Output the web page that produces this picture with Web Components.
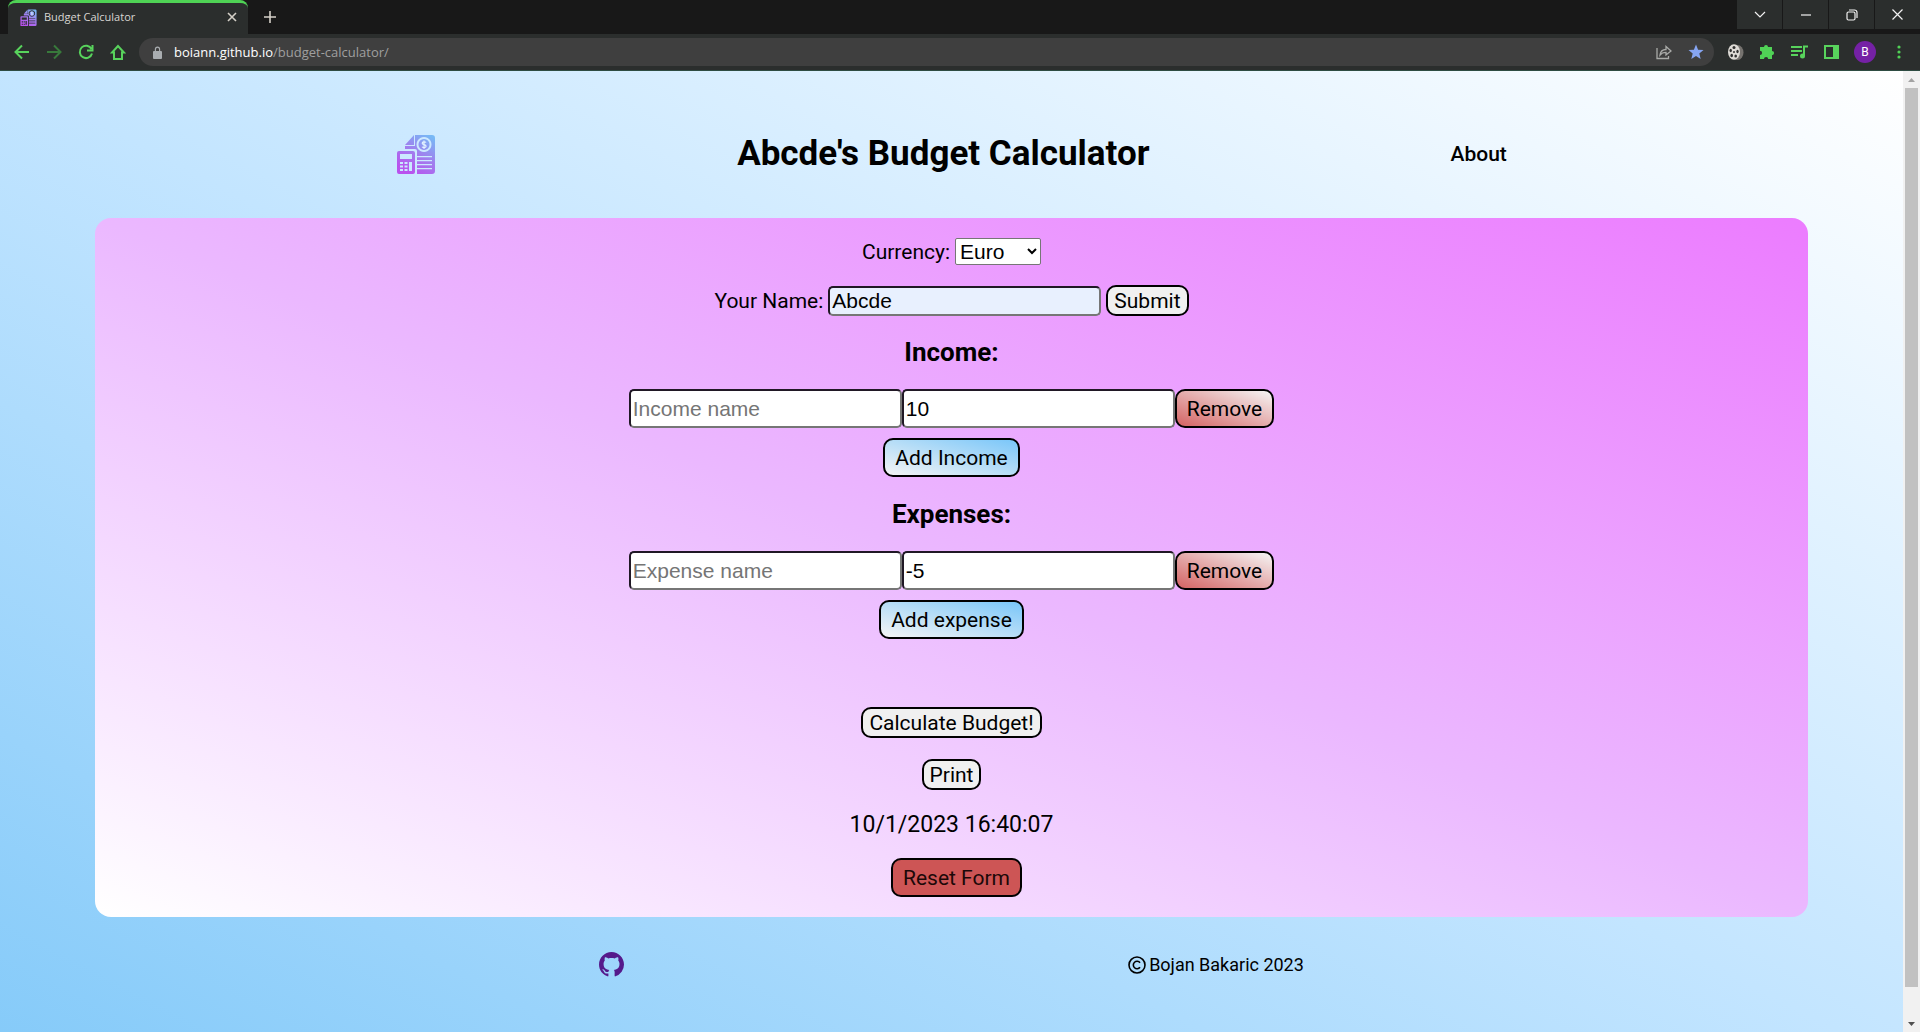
<!DOCTYPE html>
<html lang="en">
<head>
<meta charset="utf-8">
<title>Budget Calculator</title>
<style>
html, body { margin: 0; height: 100%; overflow: hidden; }
body { font: 400 21px/24px Roboto, sans-serif; color: #000; }
</style>
</head>
<body>
<browser-window></browser-window>
<script>
const CONTROL_CSS = `
  button { font: inherit; color: #000; border: 2px solid #000; border-radius: 10px; padding: 2px 6px 1px; background: #f0f0f0; white-space: nowrap; margin: 0; }
  input { box-sizing: border-box; width: 273px; height: 30px; margin: 0; padding: 1px 2px; font: 21px "Liberation Sans", Arial, sans-serif; color: #000; background: #fff; border: 2px solid; border-color: #201825 #767676 #767676 #201825; border-radius: 5px; }
  input::placeholder { color: #757575; opacity: 1; }
`;

function define(name, css, html, setup) {
  customElements.define(name, class extends HTMLElement {
    constructor() {
      super();
      this.attachShadow({ mode: 'open' }).innerHTML = `<style>${css}</style>${html}`;
    }
    connectedCallback() { if (setup) setup(this, this.shadowRoot); }
  });
}

define('budget-logo', `:host { display: block; width: 40px; height: 40px; } svg { display: block; width: 100%; height: 100%; }`, `
  <svg viewBox="0 0 40 40" aria-hidden="true">
    <defs><linearGradient id="g" gradientUnits="userSpaceOnUse" x1="12" y1="38" x2="34" y2="2"><stop offset="0" stop-color="#b952ee"/><stop offset=".5" stop-color="#a07fee"/><stop offset="1" stop-color="#78b8f5"/></linearGradient></defs>
    <g fill="url(#g)">
      <path fill-rule="evenodd" d="M19 1H36a3 3 0 0 1 3 3V37a3 3 0 0 1-3 3H21V17a2 2 0 0 0-2-2H9V12H19ZM28 3a7.500 7.500 0 1 0 .01 0ZM21 22v1.200h15V22ZM21 26v1.200h15V26ZM21 30v1.200h15V30ZM21 34v1.200h15V34Z"/>
      <path d="M18 1V11H9ZM28 5a5.500 5.500 0 1 0 .01 0Z"/>
      <path fill-rule="evenodd" d="M3 17H17a2 2 0 0 1 2 2V38a2 2 0 0 1-2 2H3a2 2 0 0 1-2-2V19a2 2 0 0 1 2-2ZM4 20v5h12v-5ZM4 28v2h3v-2ZM8.500 28v2h3v-2ZM13 28v9h3v-9ZM4 31.500v2h3v-2ZM8.500 31.500v2h3v-2ZM4 35v2h3v-2ZM8.500 35v2h3v-2Z"/>
    </g>
    <path d="M30 8.500c-.6-1-3.800-1-3.800.7 0 2 3.900 1 3.900 3 0 1.700-3.400 1.700-4.100.5M28 6.500v8.500" fill="none" stroke="#e3f3ff" stroke-width="1.200"/>
  </svg>`);

define('browser-tabs', `
  :host { display: flex; height: 34px; background: #181818; color: #d8d6d2; font: 400 11px/16px "Open Sans", sans-serif; justify-content: space-between; }
  .left, .controls { display: flex; }
  .tab { box-sizing: border-box; width: 240px; margin-left: 8px; padding: 0 9px 3px 12px; display: flex; align-items: center; gap: 7px; background: #2b2e2d; border-top: 3px solid #4fd355; border-radius: 8px 8px 0 0; }
  budget-logo { width: 17px; height: 17px; }
  .tab span { flex: 1; }
  button { padding: 0; margin: 0; border: 0; background: none; color: inherit; display: grid; place-items: center; }
  .tab button { width: 14px; height: 14px; }
  .new { width: 44px; height: 34px; }
  .controls { gap: 1px; height: 29px; }
  .controls button { width: 45px; height: 29px; background: #2b2e2d; }
  svg { display: block; fill: none; stroke: #f2f2f2; stroke-width: 1.2; }
  .tab svg, .new svg { stroke: #d5d0c8; stroke-width: 1.6; }
`, `
  <div class="left">
    <div class="tab"><budget-logo></budget-logo><span>Budget Calculator</span>
      <button aria-label="Close tab"><svg width="10" height="10"><path d="M1 1l8 8M9 1L1 9"/></svg></button></div>
    <button class="new" aria-label="New tab"><svg width="12" height="12"><path d="M6 0v12M0 6h12"/></svg></button>
  </div>
  <div class="controls">
    <button aria-label="Search tabs"><svg width="12" height="8"><path d="M1 1l5 5 5-5"/></svg></button>
    <button aria-label="Minimize"><svg width="10" height="2"><path d="M0 1h10"/></svg></button>
    <button aria-label="Restore"><svg width="12" height="12"><rect x="1" y="3" width="8" height="8" rx="1.500"/><path d="M3 1h5.500a2.500 2.500 0 0 1 2.500 2.500V9"/></svg></button>
    <button aria-label="Close"><svg width="11" height="11"><path d="M.5.5l10 10M10.500.5l-10 10"/></svg></button>
  </div>`);

define('browser-toolbar', `
  :host { display: flex; box-sizing: border-box; height: 37px; padding: 0 12px 0 13px; align-items: center; gap: 12px; background: #2b2e2d; border-bottom: 1px solid #2e4c42; font: 400 13px/20px "Open Sans", sans-serif; }
  nav, .tools { display: flex; align-items: center; gap: 14px; }
  button { padding: 0; border: 0; background: none; width: 18px; height: 20px; display: grid; place-items: center; margin: 0; color: #58d35c; font: inherit; }
  .omni { flex: 1; box-sizing: border-box; height: 28px; border-radius: 14px; background: #3f3f3f; display: flex; align-items: center; padding: 0 8px 0 14px; gap: 12px; }
  .url { flex: 1; color: #9f9f9f; }
  .url b { font-weight: 400; color: #fff; }
  .omni button { width: 20px; }
  .avatar { width: 22px; height: 22px; border-radius: 50%; background: #7521a5; color: #fff; font: 12px/22px Roboto, sans-serif; }
  svg { display: block; fill: none; stroke: #58d35c; stroke-width: 2; }
`, `
  <nav aria-label="Browser">
    <button aria-label="Back"><svg width="16" height="16"><path d="M15 8H2M8 1.500L1.500 8 8 14.500"/></svg></button>
    <button aria-label="Forward"><svg width="16" height="16" style="stroke:#387a3b"><path d="M1 8h13M8 1.500L14.500 8 8 14.500"/></svg></button>
    <button aria-label="Reload"><svg width="16" height="16"><path d="M13.500 5A6.200 6.200 0 1 0 14 9.500M14.500 1v5.500H9"/></svg></button>
    <button aria-label="Home"><svg width="16" height="17"><path d="M8 2L2 8.500h2V15h8V8.500h2Z"/></svg></button>
  </nav>
  <div class="omni">
    <svg width="9" height="13" viewBox="0 0 10 13" preserveAspectRatio="none" style="stroke:none;fill:#a9adb0"><path fill-rule="evenodd" d="M1 5h1V3.500a3 3 0 0 1 6 0V5h1a1 1 0 0 1 1 1v6a1 1 0 0 1-1 1H1a1 1 0 0 1-1-1V6a1 1 0 0 1 1-1Zm2.300 0h3.400V3.500a1.700 1.700 0 0 0-3.400 0Z"/></svg>
    <span class="url"><b>boiann.github.io</b>/budget-calculator/</span>
    <button aria-label="Share"><svg width="16" height="16" style="stroke:#a9aaa8;stroke-width:1.300"><path d="M1 4v10.500h11.500V12M4 11c.5-4 3-5.500 6-5.500V2.500L15 7l-5 4V8.300C7.500 8.300 5.500 9 4 11Z"/></svg></button>
    <button aria-label="Bookmark"><svg width="16" height="16" style="stroke:none;fill:#86a5f2"><path d="M8 .5l2.100 5.200 5.400.4-4.200 3.500 1.400 5.500L8 12.100l-4.700 3 1.400-5.500L.5 6.100l5.400-.4Z"/></svg></button>
  </div>
  <div class="tools">
    <button aria-label="Extension"><svg width="17" height="17" style="stroke:none"><ellipse cx="10.500" cy="8.500" rx="6" ry="7.500" fill="#76736f"/><ellipse cx="7" cy="8" rx="6" ry="7.700" fill="#dedbd6"/><g fill="#30302f"><ellipse cx="7" cy="3.500" rx="1.500" ry="1.600"/><ellipse cx="3.700" cy="6.500" rx="1.200" ry="1.700"/><ellipse cx="4.700" cy="11.500" rx="1.300" ry="1.800"/><ellipse cx="8.700" cy="12" rx="1.300" ry="1.600"/><ellipse cx="10.500" cy="7.500" rx="1.200" ry="1.800"/><circle cx="7" cy="8" r="1"/></g></svg></button>
    <button aria-label="Extensions"><svg width="16" height="16" style="stroke:none;fill:#50d256"><path d="M5 3a2 2 0 0 1 4 0h4v4a2.100 2.100 0 0 1 0 4.200V15H9.200a2.100 2.100 0 0 0-4.200 0H1v-4a2.100 2.100 0 0 0 0-4.200V3Z"/></svg></button>
    <button aria-label="Media"><svg width="17" height="14"><path d="M0 2h11M0 6h11M0 10h7M13 11V1.500h4" /><circle cx="11.500" cy="11" r="2.500" fill="#58d35c" stroke="none"/></svg></button>
    <button aria-label="Side panel"><svg width="15" height="14"><path d="M1 1h13v12H1Z"/><path d="M9 0h6v14H9Z" fill="#58d35c" stroke="none"/></svg></button>
    <button class="avatar" aria-label="Profile">B</button>
    <button aria-label="Menu"><svg width="4" height="14" style="stroke:none;fill:#50d256"><circle cx="2" cy="2" r="1.600"/><circle cx="2" cy="7" r="1.600"/><circle cx="2" cy="12" r="1.600"/></svg></button>
  </div>`);

define('page-scrollbar', `
  :host { display: flex; flex-direction: column; width: 17px; background: #f1f1f1; align-items: center; }
  svg { display: block; width: 17px; height: 17px; flex: none; }
  .track { flex: 1; width: 13px; }
  .thumb { height: 97%; background: #c1c1c1; }
`, `<svg><path d="M5 11l3.500-4L12 11Z" fill="#a3a3a3"/></svg><div class="track"><div class="thumb"></div></div><svg><path d="M5 7h7l-3.500 4Z" fill="#505050"/></svg>`);

define('budget-header', `
  :host { display: flex; width: 90%; margin: 0 auto; padding: 62px 0 43px; justify-content: space-evenly; align-items: center; }
  h1 { margin: 0; font-size: 35px; line-height: 42px; font-weight: 700; }
  a { color: #000; text-decoration: none; font-weight: 500; }
`, `<budget-logo></budget-logo><h1>Abcde's Budget Calculator</h1><a href="#about">About</a>`);

define('entry-section', `
  ${CONTROL_CSS}
  :host { display: flex; flex-direction: column; align-items: center; }
  h2 { margin: 0 0 21px; font-size: 26px; line-height: 32px; font-weight: 700; }
  .row { display: flex; margin-bottom: 10px; }
  .row input { height: 39px; }
  button { height: 39px; padding: 0 10px; }
  .remove { background: linear-gradient(to top right, #d46363, #f5f5f5); }
  .add { background: linear-gradient(to bottom left, #79c6f9, #f5f5f5); }
`, `<h2><slot></slot></h2>
  <div class="row"><input class="name" type="text"><input class="amount" type="text" inputmode="decimal"><button class="remove" type="button">Remove</button></div>
  <button class="add" type="button"></button>`,
  (host, root) => {
    const name = root.querySelector('.name');
    name.placeholder = host.getAttribute('placeholder');
    name.setAttribute('aria-label', name.placeholder);
    const amount = root.querySelector('.amount');
    amount.value = host.getAttribute('amount');
    amount.setAttribute('aria-label', 'Amount');
    root.querySelector('.add').textContent = host.getAttribute('add');
  });

define('budget-form', `
  ${CONTROL_CSS}
  :host { display: block; width: 90%; margin: 0 auto; border-radius: 16px; background: linear-gradient(to top right, #fff, #ebb8ff 50%, #ec7cff); }
  form { display: flex; flex-direction: column; align-items: center; padding: 20px 0; }
  .field { display: flex; align-items: center; gap: 5px; margin-bottom: 20px; }
  select { box-sizing: border-box; width: 86px; height: 27px; margin: 0; padding: 0; font: 21px "Liberation Sans", Arial, sans-serif; color: #000; background: #fff; border: 1px solid #767676; border-radius: 2px; }
  #name { background: #e8f0fe; }
  entry-section { margin-bottom: 21px; }
  .calc { margin-top: 47px; }
  .print { margin: 21px 0; }
  time { font-size: 23px; line-height: 27px; }
  .reset { height: 39px; padding: 0 10px; margin: 20px 0 0 10px; background: #cd5555; color: #1c0808; }
`, `<form onsubmit="return false">
    <div class="field"><label for="currency">Currency:</label><select id="currency"><option>Euro</option><option>Dollar</option></select></div>
    <div class="field"><label for="name">Your Name:</label><input id="name" type="text" value="Abcde"><button type="submit">Submit</button></div>
    <entry-section placeholder="Income name" amount="10" add="Add Income">Income:</entry-section>
    <entry-section placeholder="Expense name" amount="-5" add="Add expense">Expenses:</entry-section>
    <button class="calc" type="button">Calculate Budget!</button>
    <button class="print" type="button">Print</button>
    <time datetime="2023-10-01T16:40:07">10/1/2023 16:40:07</time>
    <button class="reset" type="reset">Reset Form</button>
  </form>`);

define('budget-footer', `
  :host { display: flex; width: 90%; margin: 0 auto; padding: 35px 0 86px; justify-content: space-evenly; align-items: center; font-size: 18px; line-height: 25px; }
  svg { display: block; }
  p { margin: 0; display: flex; align-items: center; gap: 3px; }
`, `<a href="#github" aria-label="GitHub"><svg width="25" height="25" viewBox="0 0 16 16" fill="#551a8b"><path d="M8 0C3.580 0 0 3.580 0 8c0 3.540 2.290 6.530 5.470 7.590.4.070.55-.17.55-.38 0-.19-.01-.82-.01-1.490-2.010.37-2.530-.49-2.690-.94-.09-.23-.48-.94-.82-1.130-.28-.15-.68-.52-.01-.53.63-.01 1.080.58 1.230.82.72 1.210 1.870.87 2.330.66.07-.52.28-.87.51-1.070-1.780-.2-3.640-.89-3.640-3.950 0-.87.31-1.590.82-2.150-.08-.2-.36-1.020.08-2.120 0 0 .67-.21 2.200.82.64-.18 1.320-.27 2-.27s1.360.09 2 .27c1.530-1.040 2.200-.82 2.200-.82.44 1.100.16 1.920.08 2.120.51.56.82 1.270.82 2.150 0 3.070-1.870 3.750-3.650 3.950.29.25.54.73.54 1.480 0 1.070-.01 1.930-.01 2.200 0 .21.15.46.55.38A8.010 8.010 0 0 0 16 8c0-4.420-3.580-8-8-8Z"/></svg></a>
  <p><svg width="18" height="18" fill="none" stroke="#000" stroke-width="1.600"><circle cx="9" cy="9" r="8"/><path d="M12 6.800a3.700 3.700 0 1 0 0 4.400"/></svg>Bojan Bakaric 2023</p>`);

define('browser-window', `
  :host { display: flex; flex-direction: column; height: 100vh; overflow: hidden; }
  browser-tabs, browser-toolbar { flex: none; }
  .view { flex: 1; min-height: 0; display: flex; overflow: hidden; }
  main { flex: 1; align-self: flex-start; background: linear-gradient(to top right, #84caf9, #c3e5ff 50%, #fff); }
`, `<browser-tabs></browser-tabs><browser-toolbar></browser-toolbar>
  <div class="view"><main><budget-header></budget-header><budget-form></budget-form><budget-footer></budget-footer></main><page-scrollbar></page-scrollbar></div>`);
</script>
</body>
</html>
